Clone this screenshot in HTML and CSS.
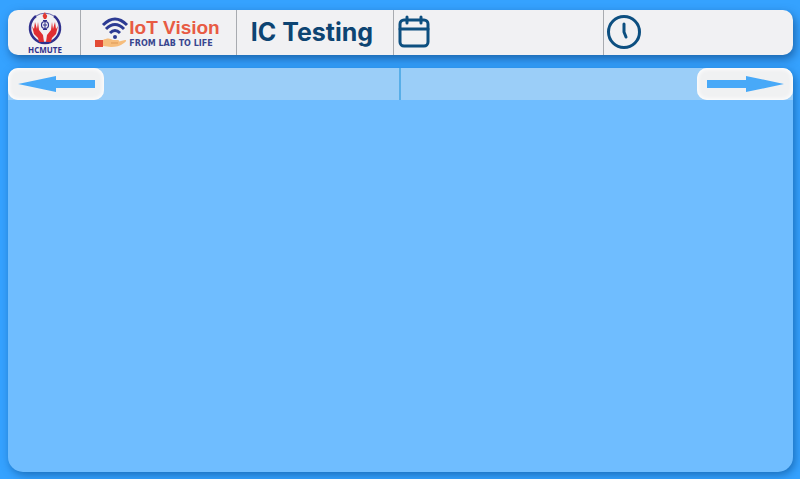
FILE: index.html
```html
<!DOCTYPE html>
<html lang="en">
<head>
<meta charset="utf-8">
<meta name="viewport" content="width=device-width, initial-scale=1">
<title>IC Testing</title>
<link rel="stylesheet" href="styles.css">
</head>
<body>
<header class="topbar">
  <div class="cell school">
    <svg class="crest" viewBox="0 0 36 34" aria-hidden="true">
      <path d="M9 5A15 15 0 1 0 27 5" fill="none" stroke="#30308c" stroke-width="2.5"/>
      <path d="M9 5A16 16 0 0 1 27 5" fill="none" stroke="#6a6aae" stroke-width="1"/>
      <path d="M18 1c0 2 3 3 2 5l-1 2h-2l-1-2c-1-2 1-3 2-5z" fill="#e23a32"/>
      <path d="M5 15l2 3 1-7 2 7 1-7 1 8 4 5 1 7h-5l-1-4-4-4zM31 15l-2 3-1-7-2 7-1-7-1 8-4 5-1 7h5l1-4 4-4z" fill="#e02f32"/>
      <circle cx="18" cy="14" r="3.500" fill="#f1f1f3" stroke="#30308c" stroke-width="1.2"/>
      <path d="M18 9v10M16 9.500h4M16 18.500h4M16 14h4" stroke="#30308c"/>
    </svg>
    <span class="school-name">HCMUTE</span>
  </div>
  <div class="cell brand">
    <svg class="brand-mark" viewBox="0 0 34 32" aria-hidden="true">
      <g fill="none" stroke="#2c3b93" stroke-width="3">
        <path d="M8 8Q20-4 32 8"/>
        <path d="M11 12Q20 3 29 12"/>
        <path d="M15 16Q20 11 25 16"/>
      </g>
      <circle cx="20" cy="20" r="2" fill="#2c3b93"/>
      <path d="M8 23c4-2 7-2 10 0h5c2 1 1 2-1 2l8-2c2 0 1 2-1 3-4 3-8 4-13 4l-8-1z" fill="#f6bd7c"/>
      <path d="M16 26h7" stroke="#dd9755"/>
      <path d="M0 23h8v7H0z" fill="#e34b35"/>
    </svg>
    <div class="brand-words">
      <span class="brand-name">IoT Vision</span>
      <span class="brand-line">FROM LAB TO LIFE</span>
    </div>
  </div>
  <div class="cell title"><h1>IC Testing</h1></div>
  <div class="cell info">
    <svg class="icon" viewBox="0 0 36 36" role="img" aria-label="Date">
      <rect x="4" y="5" width="28" height="26" rx="4"/>
      <path d="M4 14h28M11 2v6M25 2v6"/>
    </svg>
  </div>
  <div class="cell info">
    <svg class="icon" viewBox="0 0 36 36" role="img" aria-label="Time">
      <circle cx="18" cy="17" r="15.500"/>
      <path d="M18 9v8l2 5"/>
    </svg>
  </div>
</header>
<main class="panel">
  <nav class="tabs" aria-label="Pages">
    <div class="tab">
      <button class="step" type="button" aria-label="Previous">
        <svg viewBox="0 0 77 16" aria-hidden="true"><path d="M0 8L38 0V4H77V12H38V16z"/></svg>
      </button>
    </div>
    <div class="tab tab-end">
      <button class="step" type="button" aria-label="Next">
        <svg viewBox="0 0 77 16" aria-hidden="true"><path d="M77 8L39 0V4H0V12H39V16z"/></svg>
      </button>
    </div>
  </nav>
</main>
</body>
</html>
```
FILE: styles.css
```css
* {
  box-sizing: border-box;
}

body {
  display: flex;
  flex-direction: column;
  gap: 13px;
  min-height: 100vh;
  margin: 0;
  padding: 10px 7px 7px 8px;
  background: #35a2ff;
  color: #0d4472;
  font-family: Inter, "Liberation Sans", sans-serif;
}

.topbar {
  display: grid;
  grid-template-columns: 73fr 156fr 157fr 210fr 189fr;
  min-height: 45px;
  border-radius: 10px;
  background: #f1f1f3;
  box-shadow: 2px 4px 10px rgba(0, 40, 90, 0.5);
}

.cell {
  display: flex;
  align-items: center;
  border-right: 1px solid #a8abb0;
}

.cell:last-child {
  border-right: 0;
}

.school {
  flex-direction: column;
  justify-content: center;
  padding-left: 2px;
}

.crest {
  width: 36px;
  height: 34px;
}

.school-name {
  color: #30308c;
  font: bold 8px/9px "Open Sans", sans-serif;
}

.brand {
  justify-content: center;
  padding-right: 2px;
}

.brand-mark {
  width: 34px;
  height: 32px;
}

.brand-words {
  display: flex;
  flex-direction: column;
  white-space: nowrap;
}

.brand-name {
  color: #e85b43;
  font: bold 19px/22px "Liberation Sans", sans-serif;
}

.brand-line {
  color: #39468f;
  font: bold 8px/9px "DejaVu Sans", sans-serif;
}

.title {
  justify-content: center;
  padding: 0 6px 2px 0;
}

h1 {
  margin: 0;
  font-size: 25px;
  font-weight: 700;
  line-height: 32px;
  white-space: nowrap;
}

.info {
  padding-left: 2px;
}

.icon {
  width: 36px;
  height: 36px;
  fill: none;
  stroke: #0d4f80;
  stroke-width: 3;
  stroke-linecap: round;
  stroke-linejoin: round;
}

.panel {
  flex: 1;
  overflow: hidden;
  border-radius: 10px 10px 15px 15px;
  background: #6fbdff;
  box-shadow: 2px 3px 8px rgba(0, 60, 120, 0.5);
}

.tabs {
  display: grid;
  grid-template-columns: 1fr 1fr;
  background: #9bcef8;
}

.tab {
  display: flex;
  border-right: 2px solid #58aee8;
}

.tab-end {
  justify-content: flex-end;
  border-right: 0;
}

.step {
  display: flex;
  align-items: center;
  justify-content: center;
  width: 96px;
  height: 32px;
  padding: 0;
  border: 0;
  border-radius: 10px;
  background: #f0f1f2;
  box-shadow: inset 0 0 4px 1px #ffffff;
}

.step svg {
  width: 77px;
  height: 16px;
  fill: #48a9f8;
}
```
